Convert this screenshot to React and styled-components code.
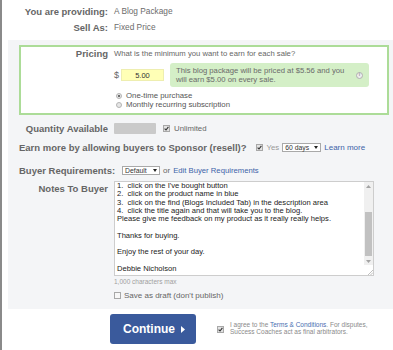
import React from 'react';
import styled, { createGlobalStyle } from 'styled-components';

const GlobalStyle = createGlobalStyle`
  html, body {
    margin: 0;
    padding: 0;
    background: #fff;
  }
  body {
    font-family: "Liberation Sans", Arial, sans-serif;
  }
`;

const Page = styled.div`
  width: 393px;
  min-height: 350px;
  box-sizing: border-box;
  border-left: 2px solid #8a8a8a;
  padding-top: 3px;
`;

const Field = styled.div`
  display: grid;
  grid-template-columns: ${p => p.$lw}px 1fr;
  column-gap: 6px;
  align-items: ${p => p.$align || 'center'};
  height: ${p => (p.$h ? `${p.$h}px` : 'auto')};
  margin-top: ${p => p.$mt || 0}px;
`;

const Label = styled.div`
  font-size: 9.5px;
  font-weight: bold;
  color: #666;
  text-align: right;
  white-space: nowrap;
  padding-top: ${p => p.$pt || 0}px;
`;

const Value = styled.span`
  font-size: 8.3px;
  color: #6c6c6c;
  white-space: nowrap;
`;

const Panel = styled.div`
  margin: 5px 0 0 6px;
  background: #f4f5f7;
  padding: 5px 4px 9px 11px;
`;

const GreenBox = styled.div`
  border: 2px solid #acdc98;
  background: #fff;
  padding: 0 9px 4px 0;
  display: flex;
  flex-direction: column;
`;

const Question = styled.span`
  font-size: 7.7px;
  color: #666;
  white-space: nowrap;
`;

const Inline = styled.div`
  display: flex;
  align-items: center;
`;

const Dollar = styled.span`
  font-size: 9px;
  color: #666;
  width: 7px;
`;

const PriceInput = styled.div`
  width: 43px;
  height: 12px;
  box-sizing: border-box;
  background: #ffffb6;
  border: 1px solid #eeeeb0;
  font-size: 7.5px;
  color: #333;
  display: flex;
  align-items: center;
  justify-content: center;
`;

const InfoBox = styled.div`
  margin-left: 6px;
  width: 199px;
  height: 24px;
  box-sizing: border-box;
  border-radius: 3px;
  background: #d4efc7;
  padding: 0 6px;
  display: flex;
  align-items: center;
  justify-content: space-between;
  font-size: 7.7px;
  line-height: 9.4px;
  color: #6a6a6a;
`;

const InfoIcon = styled.span`
  width: 7px;
  height: 7px;
  box-sizing: border-box;
  border-radius: 50%;
  border: 1px solid #b0b0b0;
  background: #eee;
  color: #999;
  font-size: 5px;
  font-weight: bold;
  display: flex;
  align-items: center;
  justify-content: center;
`;

const Option = styled.div`
  display: flex;
  align-items: center;
  gap: 4px;
  font-size: 7.8px;
  color: #555;
  white-space: nowrap;
`;

const Radio = styled.span`
  width: 6px;
  height: 6px;
  box-sizing: border-box;
  border-radius: 50%;
  border: 1px solid #b4b4b4;
  background: #e6e6e6;
  display: flex;
  align-items: center;
  justify-content: center;
  margin-left: 2px;
  &::after {
    content: '';
    width: 2px;
    height: 2px;
    border-radius: 50%;
    background: ${p => (p.$on ? '#444' : 'transparent')};
  }
`;

const Box = styled.span`
  width: 7px;
  height: 7px;
  box-sizing: border-box;
  border: 1px solid #a8a8a8;
  background: ${p => (p.$on ? '#e2e2e2' : '#f7f7f7')};
  display: inline-flex;
  align-items: center;
  justify-content: center;
  flex: none;
`;

function Check({ on }) {
  return (
    <Box $on={on}>
      {on && (
        <svg width="5" height="5" viewBox="0 0 5 5">
          <path d="M0.6 2.6 L2 4 L4.4 0.8" fill="none" stroke="#333" strokeWidth="1.1" />
        </svg>
      )}
    </Box>
  );
}

const QtyBox = styled.div`
  width: 42px;
  height: 11px;
  background: #cacaca;
  border-radius: 1px;
  margin-right: 7px;
`;

const Text = styled.span`
  font-size: ${p => p.$fs || 7.8}px;
  color: ${p => p.$c || '#666'};
  margin-left: ${p => p.$ml || 0}px;
  white-space: nowrap;
`;

const Link = styled.a`
  font-size: ${p => p.$fs || 8}px;
  color: #3d63a8;
  text-decoration: none;
  margin-left: ${p => p.$ml || 0}px;
  white-space: nowrap;
`;

const Row = styled.div`
  display: flex;
  align-items: center;
  height: ${p => p.$h}px;
  margin-top: ${p => p.$mt}px;
`;

const WideLabel = styled(Label)`
  text-align: left;
  margin-right: ${p => p.$mr}px;
`;

const SelectBox = styled.span`
  width: ${p => p.$w}px;
  height: 9px;
  box-sizing: border-box;
  border: 1px solid #a9a9a9;
  background: #fff;
  font-size: 6.8px;
  color: #333;
  padding: 0 2px;
  display: inline-flex;
  align-items: center;
  justify-content: space-between;
  margin-left: ${p => p.$ml || 0}px;
`;

function Select({ w, ml, children }) {
  return (
    <SelectBox $w={w} $ml={ml}>
      {children}
      <svg width="4" height="3" viewBox="0 0 4 3">
        <path d="M0 0 H4 L2 3 Z" fill="#222" />
      </svg>
    </SelectBox>
  );
}

const NotesBox = styled.div`
  width: 260px;
  height: 95px;
  box-sizing: border-box;
  border: 1px solid #cdcdcd;
  background: #fff;
  display: flex;
`;

const NotesText = styled.div`
  flex: 1;
  padding: 0 2px;
  font-size: 7.6px;
  line-height: 8.3px;
  color: #222;
  white-space: pre;
  overflow: hidden;
`;

const Scrollbar = styled.div`
  width: 9px;
  display: flex;
  flex-direction: column;
  background: #f0f0f0;
`;

const Arrow = styled.div`
  height: ${p => p.$h}px;
  display: flex;
  align-items: center;
  justify-content: center;
`;

const Track = styled.div`
  flex: 1;
  display: flex;
  flex-direction: column;
  padding-top: ${p => p.$offset}px;
`;

const Thumb = styled.div`
  height: ${p => p.$h}px;
  margin: 0 1px;
  background: #c1c1c1;
`;

const Corner = styled.div`
  height: 10px;
  background: #fff;
  display: flex;
  align-items: flex-end;
  justify-content: flex-end;
`;

const ContinueRow = styled.div`
  display: flex;
  align-items: center;
  margin-top: 5px;
  padding-left: 108px;
`;

const ContinueButton = styled.button`
  width: 86px;
  height: 30px;
  border: none;
  border-radius: 3px;
  background: #3a5a9c;
  color: #fff;
  font-family: inherit;
  font-size: 12px;
  font-weight: bold;
  display: flex;
  align-items: center;
  justify-content: center;
  gap: 6px;
  padding: 0 0 0 2px;
`;

const Agree = styled.div`
  display: flex;
  align-items: center;
  margin-left: 21px;
  gap: 6px;
`;

const AgreeText = styled.div`
  font-size: 6.5px;
  line-height: 6.6px;
  color: #8a8a8a;
  white-space: nowrap;
  a {
    color: #4a6eb0;
    text-decoration: none;
  }
`;

const notes = `1.  click on the I've bought button
2.  click on the product name in blue
3.  click on the find (Blogs Included Tab) in the description area
4.  click the title again and that will take you to the blog.
Please give me feedback on my product as it really really helps.

Thanks for buying.

Enjoy the rest of your day.

Debbie Nicholson`;

export default function App() {
  return (
    <>
      <GlobalStyle />
      <Page>
        <Field $lw={106} $h={16}>
          <Label>You are providing:</Label>
          <Value>A Blog Package</Value>
        </Field>
        <Field $lw={106} $h={16}>
          <Label>Sell As:</Label>
          <Value>Fixed Price</Value>
        </Field>

        <Panel>
          <GreenBox>
            <Field $lw={87} $h={12}>
              <Label>Pricing</Label>
              <Question>What is the minimum you want to earn for each sale?</Question>
            </Field>
            <Field $lw={87} $mt={4}>
              <span />
              <Inline>
                <Dollar>$</Dollar>
                <PriceInput>5.00</PriceInput>
                <InfoBox>
                  <span>
                    This blog package will be priced at $5.56 and you
                    <br />
                    will earn $5.00 on every sale.
                  </span>
                  <InfoIcon>i</InfoIcon>
                </InfoBox>
              </Inline>
            </Field>
            <Field $lw={87} $h={9} $mt={4}>
              <span />
              <Option>
                <Radio $on />
                One-time purchase
              </Option>
            </Field>
            <Field $lw={87} $h={9}>
              <span />
              <Option>
                <Radio />
                Monthly recurring subscription
              </Option>
            </Field>
          </GreenBox>

          <Field $lw={89} $h={13} $mt={7}>
            <Label>Quantity Available</Label>
            <Inline>
              <QtyBox />
              <Check on />
              <Text $ml={4}>Unlimited</Text>
            </Inline>
          </Field>

          <Row $h={12} $mt={6}>
            <WideLabel $mr={9}>Earn more by allowing buyers to Sponsor (resell)?</WideLabel>
            <Check on />
            <Text $ml={4} $c="#999">Yes</Text>
            <Select w={39} ml={3}>60 days</Select>
            <Link $ml={3}>Learn more</Link>
          </Row>

          <Row $h={12} $mt={11}>
            <WideLabel $mr={7}>Buyer Requirements:</WideLabel>
            <Select w={38}>Default</Select>
            <Text $ml={3} $fs={8}>or</Text>
            <Link $ml={3} $fs={7.7}>Edit Buyer Requirements</Link>
          </Row>

          <Field $lw={89} $align="start" $mt={5}>
            <Label $pt={2}>Notes To Buyer</Label>
            <NotesBox>
              <NotesText>{notes}</NotesText>
              <Scrollbar>
                <Arrow $h={9}>
                  <svg width="5" height="3" viewBox="0 0 5 3">
                    <path d="M0 3 L2.5 0 L5 3 Z" fill="#a3a3a3" />
                  </svg>
                </Arrow>
                <Track $offset={21}>
                  <Thumb $h={44} />
                </Track>
                <Arrow $h={8}>
                  <svg width="5" height="3" viewBox="0 0 5 3">
                    <path d="M0 0 L5 0 L2.5 3 Z" fill="#a3a3a3" />
                  </svg>
                </Arrow>
                <Corner>
                  <svg width="6" height="6" viewBox="0 0 6 6">
                    <path d="M1 6 L6 1 M3.5 6 L6 3.5" stroke="#b0b0b0" strokeWidth="0.8" />
                  </svg>
                </Corner>
              </Scrollbar>
            </NotesBox>
          </Field>

          <Field $lw={89} $h={8} $mt={1}>
            <span />
            <Text $fs={6.5} $c="#a0a0a0">1,000 characters max</Text>
          </Field>

          <Field $lw={89} $h={10} $mt={5}>
            <span />
            <Inline>
              <Check />
              <Text $ml={3} $fs={8}>Save as draft (don't publish)</Text>
            </Inline>
          </Field>
        </Panel>

        <ContinueRow>
          <ContinueButton>
            Continue
            <svg width="4" height="7" viewBox="0 0 4 7">
              <path d="M0 0 L4 3.5 L0 7 Z" fill="#fff" />
            </svg>
          </ContinueButton>
          <Agree>
            <Check on />
            <AgreeText>
              I agree to the <a>Terms &amp; Conditions</a>. For disputes,
              <br />
              Success Coaches act as final arbitrators.
            </AgreeText>
          </Agree>
        </ContinueRow>
      </Page>
    </>
  );
}
